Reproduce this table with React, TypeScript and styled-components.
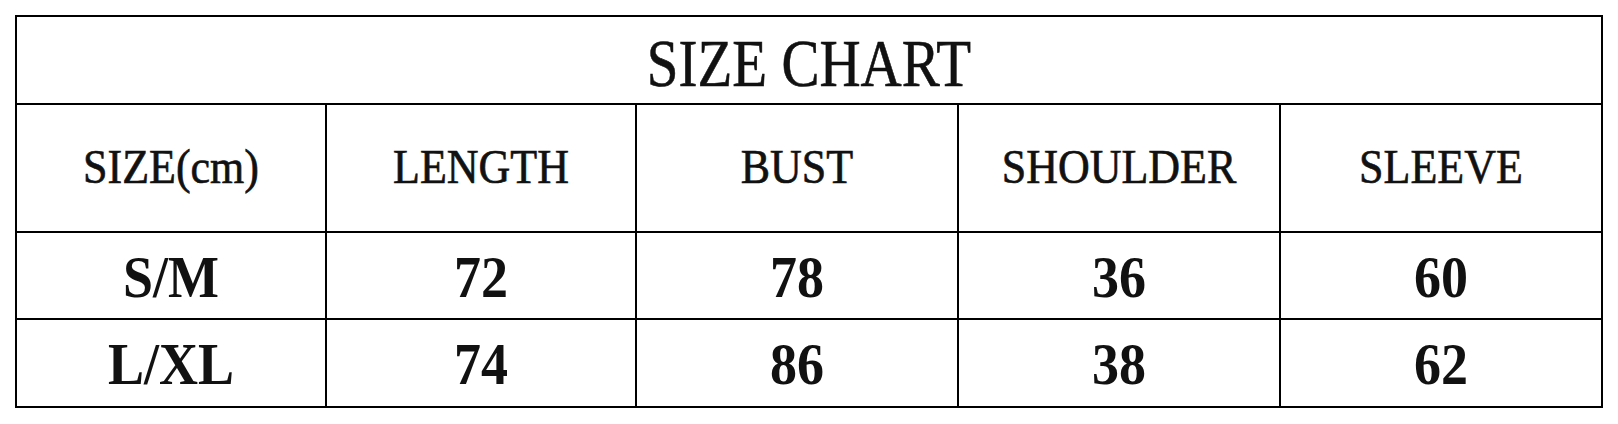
import React from "react";
import styled, { createGlobalStyle } from "styled-components";

const Global = createGlobalStyle`
  html, body { margin: 0; padding: 0; background: #ffffff; }
  body { font-family: "Liberation Serif", "Times New Roman", serif; color: #111; }
`;

const Page = styled.div`
  padding: 15px 0 0 15px;
  width: 1618px;
  height: 424px;
  box-sizing: border-box;
`;

const Chart = styled.div`
  display: grid;
  grid-template-columns: 308px 308px 320px 320px 320px;
  grid-template-rows: 86px 126px 85px 86px;
  gap: 2px;
  padding: 2px;
  background: #000;
  width: max-content;
`;

const Cell = styled.div<{ $span?: boolean }>`
  background: #fff;
  display: flex;
  align-items: center;
  justify-content: center;
  grid-column: ${(p) => (p.$span ? "1 / -1" : "auto")};
  overflow: hidden;
`;

const Title = styled.span`
  font-size: 57px;
  font-weight: 400;
  color: #111;
  line-height: 1;
  display: inline-block;
  transform: scaleY(1.18);
  -webkit-text-stroke: 0.5px #111;
  margin-top: 4px;
`;

const HeadLabel = styled.span`
  font-size: 44px;
  font-weight: 400;
  color: #111;
  line-height: 1;
  display: inline-block;
  transform: scaleY(1.09);
  -webkit-text-stroke: 0.6px #111;
`;

const Value = styled.span`
  font-size: 54px;
  font-weight: 700;
  color: #111;
  line-height: 1;
  display: inline-block;
  transform: scaleY(1.1);
  margin-top: 2px;
`;

const headers = ["SIZE(cm)", "LENGTH", "BUST", "SHOULDER", "SLEEVE"];
const rows = [
  ["S/M", "72", "78", "36", "60"],
  ["L/XL", "74", "86", "38", "62"],
];

export default function App() {
  return (
    <>
      <Global />
      <Page>
        <Chart>
          <Cell $span>
            <Title>SIZE CHART</Title>
          </Cell>
          {headers.map((h) => (
            <Cell key={h}>
              <HeadLabel>{h}</HeadLabel>
            </Cell>
          ))}
          {rows.map((r) =>
            r.map((v, i) => (
              <Cell key={r[0] + i}>
                <Value>{v}</Value>
              </Cell>
            ))
          )}
        </Chart>
      </Page>
    </>
  );
}
